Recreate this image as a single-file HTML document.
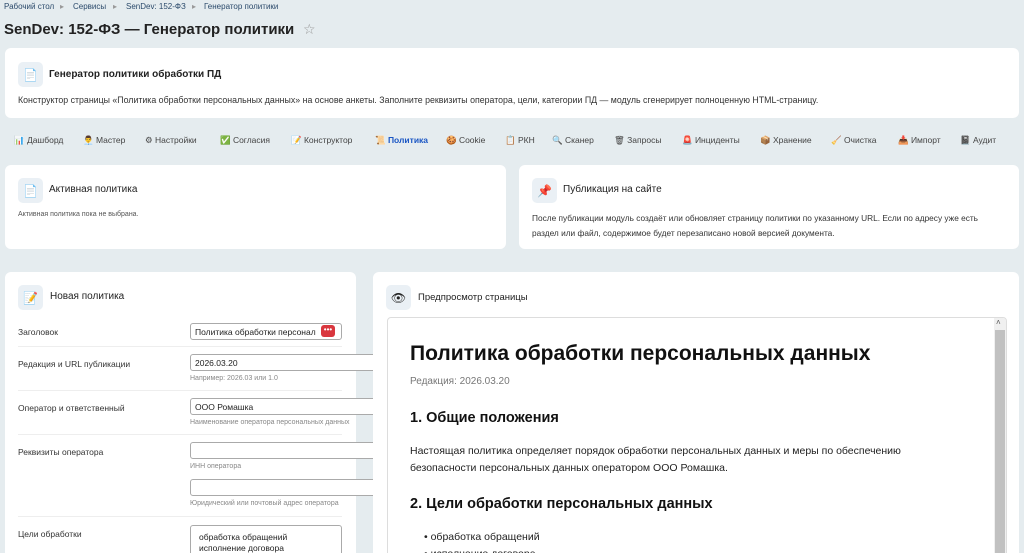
<!DOCTYPE html>
<html style="width:1024px;height:553px;overflow:hidden"><head><meta charset="utf-8"><style>
*{box-sizing:border-box;margin:0;padding:0}
body{width:1024px;height:553px;overflow:hidden;background:#e5ecef;font-family:"Liberation Sans","DejaVu Sans",sans-serif;color:#222;position:relative}
.a{position:absolute;white-space:nowrap}
.card{position:absolute;background:#fff;border-radius:6px}
.ib{position:absolute;width:25px;height:25px;background:#eaf0f5;border-radius:5px;display:flex;align-items:center;justify-content:center;font-size:12px}
.bc{font-size:8px;color:#2b4a6b;top:2px}
.nav{top:135px;font-size:8.5px;color:#444}
.lbl{font-size:8.5px;color:#333}
.inp{position:absolute;height:17px;border:1px solid #aaa;border-radius:3px;background:#fff;font-size:8.5px;padding:3px 4px;white-space:nowrap;overflow:hidden}
.hint{font-size:7px;color:#888}
.sep{position:absolute;left:18px;width:324px;height:1px;background:#eee}
</style></head><body>
<div class="a bc" style="left:4px">Рабочий стол</div>
<div class="a bc" style="left:60px;color:#999">▸</div>
<div class="a bc" style="left:73px">Сервисы</div>
<div class="a bc" style="left:113px;color:#999">▸</div>
<div class="a bc" style="left:126px">SenDev: 152-ФЗ</div>
<div class="a bc" style="left:192px;color:#999">▸</div>
<div class="a bc" style="left:204px">Генератор политики</div>
<div class="a" style="left:4px;top:21px;font-size:15px;font-weight:bold;color:#222">SenDev: 152-ФЗ — Генератор политики</div>
<div class="a" style="left:303px;top:21px;font-size:14px;color:#999">☆</div>

<div class="card" style="left:5px;top:48px;width:1014px;height:70px">
<div class="ib" style="left:13px;top:14px">📄</div>
<div class="a" style="left:44px;top:21px;font-size:10px;font-weight:bold">Генератор политики обработки ПД</div>
<div class="a" style="left:13px;top:47px;font-size:8.8px;color:#333">Конструктор страницы «Политика обработки персональных данных» на основе анкеты. Заполните реквизиты оператора, цели, категории ПД — модуль сгенерирует полноценную HTML-страницу.</div>
</div>

<div class="a nav" style="left:14px">📊 Дашборд</div>
<div class="a nav" style="left:83px">👨‍💼 Мастер</div>
<div class="a nav" style="left:145px">⚙ Настройки</div>
<div class="a nav" style="left:220px">✅ Согласия</div>
<div class="a nav" style="left:291px">📝 Конструктор</div>
<div class="a nav" style="left:375px;color:#1a56c4;font-weight:bold">📜 Политика</div>
<div class="a nav" style="left:446px">🍪 Cookie</div>
<div class="a nav" style="left:505px">📋 РКН</div>
<div class="a nav" style="left:552px">🔍 Сканер</div>
<div class="a nav" style="left:614px">🗑 Запросы</div>
<div class="a nav" style="left:682px">🚨 Инциденты</div>
<div class="a nav" style="left:760px">📦 Хранение</div>
<div class="a nav" style="left:831px">🧹 Очистка</div>
<div class="a nav" style="left:898px">📥 Импорт</div>
<div class="a nav" style="left:960px">📓 Аудит</div>

<div class="card" style="left:5px;top:165px;width:501px;height:84px">
<div class="ib" style="left:13px;top:13px">📄</div>
<div class="a" style="left:44px;top:19px;font-size:10px">Активная политика</div>
<div class="a" style="left:13px;top:46px;font-size:7px;color:#555">Активная политика пока не выбрана.</div>
</div>
<div class="card" style="left:519px;top:165px;width:500px;height:84px">
<div class="ib" style="left:13px;top:13px">📌</div>
<div class="a" style="left:44px;top:19px;font-size:10px">Публикация на сайте</div>
<div class="a" style="left:13px;top:46px;font-size:8.3px;color:#333;line-height:15px">После публикации модуль создаёт или обновляет страницу политики по указанному URL. Если по адресу уже есть<br>раздел или файл, содержимое будет перезаписано новой версией документа.</div>
</div>

<div class="card" style="left:5px;top:272px;width:351px;height:290px"></div>
<div class="ib" style="left:18px;top:285px">📝</div>
<div class="a" style="left:50px;top:291px;font-size:10px">Новая политика</div>
<div class="a lbl" style="left:18px;top:327px">Заголовок</div>
<div class="inp" style="left:190px;top:323px;width:152px">Политика обработки персонал</div>
<div class="a" style="left:321px;top:325px;width:14px;height:12px;background:#d9363e;border-radius:3px;color:#fff;font-size:8px;text-align:center;line-height:9px">•••</div>
<div class="sep" style="top:346px"></div>
<div class="a lbl" style="left:18px;top:359px">Редакция и URL публикации</div>
<div class="inp" style="left:190px;top:354px;width:190px">2026.03.20</div>
<div class="a hint" style="left:190px;top:375px">Например: 2026.03 или 1.0</div>
<div class="sep" style="top:390px"></div>
<div class="a lbl" style="left:18px;top:403px">Оператор и ответственный</div>
<div class="inp" style="left:190px;top:398px;width:190px">ООО Ромашка</div>
<div class="a hint" style="left:190px;top:419px">Наименование оператора персональных данных</div>
<div class="sep" style="top:434px"></div>
<div class="a lbl" style="left:18px;top:447px">Реквизиты оператора</div>
<div class="inp" style="left:190px;top:442px;width:190px"></div>
<div class="a hint" style="left:190px;top:463px">ИНН оператора</div>
<div class="inp" style="left:190px;top:479px;width:190px"></div>
<div class="a hint" style="left:190px;top:500px">Юридический или почтовый адрес оператора</div>
<div class="sep" style="top:516px"></div>
<div class="a lbl" style="left:18px;top:529px">Цели обработки</div>
<div class="inp" style="left:190px;top:525px;width:152px;height:40px;padding:6px 8px;line-height:11px">обработка обращений<br>исполнение договора</div>

<div class="card" style="left:373px;top:272px;width:646px;height:290px">
<div class="ib" style="left:13px;top:13px">👁</div>
<div class="a" style="left:45px;top:20px;font-size:9.5px">Предпросмотр страницы</div>
<div class="a" style="left:14px;top:45px;width:620px;height:260px;border:1px solid #ddd;border-radius:4px;background:#fff;overflow:hidden">
<div class="a" style="left:606px;top:0;width:12px;height:260px;background:#f0f0f0"></div>
<div class="a" style="left:607px;top:12px;width:10px;height:250px;background:#c1c1c1"></div>
<div class="a" style="left:608px;top:0;font-size:8px;color:#555">˄</div>
<div class="a" style="left:22px;top:24px;font-size:21px;font-weight:bold;color:#111">Политика обработки персональных данных</div>
<div class="a" style="left:22px;top:58px;font-size:10px;color:#777">Редакция: 2026.03.20</div>
<div class="a" style="left:22px;top:92px;font-size:14.5px;font-weight:bold;color:#111">1. Общие положения</div>
<div class="a" style="left:22px;top:125px;font-size:10.5px;line-height:17px;color:#222">Настоящая политика определяет порядок обработки персональных данных и меры по обеспечению<br>безопасности персональных данных оператором ООО Ромашка.</div>
<div class="a" style="left:22px;top:178px;font-size:14.5px;font-weight:bold;color:#111">2. Цели обработки персональных данных</div>
<div class="a" style="left:36px;top:211px;font-size:10.5px;line-height:17px;color:#222">• обработка обращений<br>• исполнение договора</div>
</div>
</div>
</body></html>
